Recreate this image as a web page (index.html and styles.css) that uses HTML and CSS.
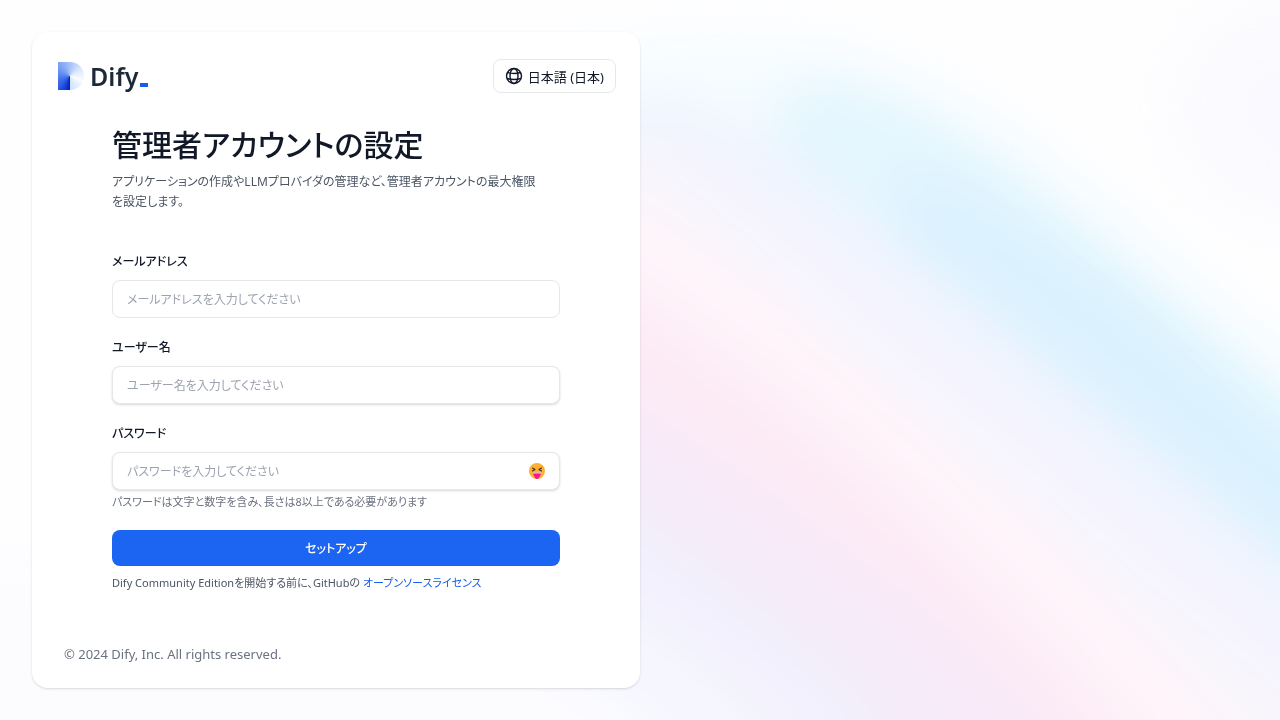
FILE: index.html
```
<!DOCTYPE html>
<html lang="ja">
<head>
    <meta charset="UTF-8">
    <meta name="viewport" content="width=device-width, initial-scale=1.0">
    <title>Dify</title>
    <link rel="stylesheet" href="styles.css">
</head>
<body>
    <svg class="backdrop" viewBox="0 0 1280 720" preserveAspectRatio="none" aria-hidden="true">
        <defs>
            <filter id="soft" x="-20%" y="-20%" width="140%" height="140%" color-interpolation-filters="sRGB">
                <feGaussianBlur stdDeviation="24"/>
            </filter>
            <filter id="softer" x="-50%" y="-50%" width="200%" height="200%" color-interpolation-filters="sRGB">
                <feGaussianBlur stdDeviation="40"/>
            </filter>
        </defs>
        <rect width="1280" height="720" fill="#fefeff"/>
        <ellipse cx="1310" cy="110" rx="120" ry="90" fill="#f9f8fe" filter="url(#softer)"/>
        <g filter="url(#soft)">
            <path d="M560 60 L700 40 L830 45 L930 85 L1010 130 L1110 210 L1200 285 L1420 465 V900 H300 V400 Z" fill="#f5fcff"/>
            <path d="M780 90 L850 80 L940 120 L1020 175 L1110 250 L1200 325 L1420 510 V900 H700 Z" fill="#e4f6fe"/>
            <path d="M900 170 L960 180 L1050 235 L1120 285 L1200 355 L1420 545 V900 H840 Z" fill="#dbf2fe"/>
            <path d="M560 100 L700 100 L790 155 L880 225 L980 305 L1080 390 L1180 470 L1420 665 V900 H300 Z" fill="#eff4fe"/>
            <path d="M560 130 L700 135 L800 205 L920 305 L1040 405 L1160 505 L1420 715 V900 H300 Z" fill="#f5f4fe"/>
            <path d="M560 130 L640 145 L760 245 L880 355 L1000 455 L1140 575 L1420 805 V900 H300 Z" fill="#f9f6fb"/>
            <path d="M560 170 L640 215 L800 325 L900 415 L1010 515 L1120 625 L1250 760 V900 H300 Z" fill="#fff4fa"/>
            <path d="M560 240 L640 295 L760 380 L860 460 L960 555 L1050 645 L1150 760 V900 H300 Z" fill="#fcebf5"/>
            <path d="M560 360 L640 405 L740 470 L850 550 L960 635 L1080 760 V900 H300 Z" fill="#f8eaf9"/>
            <path d="M560 430 L640 475 L740 545 L860 635 L970 760 V900 H300 Z" fill="#f3ecf9"/>
            <path d="M560 480 L640 530 L740 605 L840 690 L900 770 V900 H300 Z" fill="#f2f1fd"/>
            <path d="M500 560 L640 620 L720 680 L800 760 V900 H200 Z" fill="#f6f7fe"/>
            <path d="M-100 560 L440 600 L580 680 L680 760 V900 H-100 Z" fill="#fcfcff"/>
        </g>
    </svg>

    <div class="page">
        <div class="card">
            <header class="header">
                <div class="logo">
                    <span class="logo-mark"></span>
                    <span class="logo-text">Dify</span>
                    <span class="logo-cursor"></span>
                </div>
                <button type="button" class="lang-btn">
                    <svg width="18" height="18" viewBox="0 0 18 18" fill="none" stroke="currentColor" stroke-width="1.400" aria-hidden="true">
                        <circle cx="9" cy="9" r="7.500"/>
                        <ellipse cx="9" cy="9" rx="4" ry="7.500"/>
                        <path d="M2.500 5.500Q9 7.500 15.500 5.500M2 11.500Q9 13.500 16 11.500"/>
                    </svg>
                    <span>日本語 (日本)</span>
                </button>
            </header>

            <main class="content">
                <h1 class="title">管理者アカウントの設定</h1>
                <p class="desc">アプリケーションの作成やLLMプロバイダの管理など、管理者アカウントの最大権限<br>を設定します。</p>

                <form class="form">
                    <div class="form-group">
                        <label for="email">メールアドレス</label>
                        <input type="email" id="email" placeholder="メールアドレスを入力してください">
                    </div>
                    <div class="form-group">
                        <label for="name">ユーザー名</label>
                        <input type="text" id="name" class="raised" placeholder="ユーザー名を入力してください">
                    </div>
                    <div class="form-group">
                        <label for="password">パスワード</label>
                        <div class="password-box">
                            <input type="password" id="password" class="raised" placeholder="パスワードを入力してください">
                            <button type="button" class="toggle" aria-label="パスワードを表示">
                                <svg width="18" height="18" viewBox="0 0 18 18" aria-hidden="true">
                                    <circle cx="9" cy="9" r="8" fill="#ffb02e"/>
                                    <path d="M4.500 6l2.500 1.500L4.500 9M13.500 6L11 7.500 13.500 9" fill="none" stroke="#402a32" stroke-width="1.100" stroke-linecap="round" stroke-linejoin="round"/>
                                    <path d="M5 10.500h8c0 3-1.800 4.500-4 4.500s-4-1.500-4-4.500z" fill="#bb1d80"/>
                                    <path d="M5 10.500h8v1H5z" fill="#fff"/>
                                    <path d="M6.500 11.800h5V14.500a2.500 2.500 0 0 1-5 0z" fill="#ff1493"/>
                                </svg>
                            </button>
                        </div>
                        <div class="hint">パスワードは文字と数字を含み、長さは8以上である必要があります</div>
                    </div>
                    <button type="button" class="submit">セットアップ</button>
                </form>

                <p class="license">Dify Community Editionを開始する前に、GitHubの <a href="#">オープンソースライセンス</a></p>
            </main>

            <footer class="footer">© 2024 Dify, Inc. All rights reserved.</footer>
        </div>
    </div>
</body>
</html>
```
FILE: styles.css
```
* {
    box-sizing: border-box;
}
body {
    margin: 0;
    font-family: "Noto Sans", "Noto Sans CJK JP", sans-serif;
    font-feature-settings: "palt";
    font-size: 12px;
    color: #111827;
    background-color: #fefeff;
}
button, input {
    font: inherit;
    font-feature-settings: inherit;
    color: inherit;
}
.backdrop {
    position: fixed;
    top: 0;
    left: 0;
    width: 100%;
    height: 100%;
}
.page {
    position: relative;
    display: flex;
    min-height: 100vh;
    padding: 32px;
}
.card {
    display: flex;
    flex-direction: column;
    width: 50%;
    background-color: #fff;
    border-radius: 16px;
    box-shadow: 0 1px 3px rgba(16, 24, 40, 0.1), 0 1px 2px rgba(16, 24, 40, 0.06);
}
.header {
    display: flex;
    align-items: center;
    justify-content: space-between;
    padding: 27px 24px 0 26px;
}
.logo {
    display: flex;
    align-items: center;
    height: 34px;
}
.logo-mark {
    width: 26px;
    height: 28px;
    margin-right: 6px;
    border-radius: 0 14px 14px 0;
    background: conic-gradient(from 180deg at 45% 50%, #0021c4, #2c5ce4 12%, #5f88f0 28%, #9dbcf8 48%, #dbe8fe 66%, #fafcff 80%, #cfe0ff 100%);
}
.logo-text {
    font-size: 25px;
    font-weight: 600;
    line-height: 34px;
    color: #1d2939;
}
.logo-cursor {
    width: 8px;
    height: 4px;
    margin: 18px 0 0 2px;
    background-color: #155eef;
}
.lang-btn {
    display: flex;
    align-items: center;
    gap: 5px;
    height: 34px;
    padding: 0 11px;
    font-size: 13px;
    background-color: #fff;
    border: 1px solid #e5e7eb;
    border-radius: 8px;
}
.content {
    width: 100%;
    max-width: 496px;
    margin: 0 auto;
    padding: 32px 24px 0;
}
.title {
    margin: 0;
    font-size: 30px;
    font-weight: 500;
    line-height: 40px;
}
.desc {
    margin: 7px 0 0;
    line-height: 20px;
    color: #4b5563;
}
.form {
    margin-top: 40px;
}
.form-group {
    margin-bottom: 20px;
}
.form-group label {
    display: block;
    margin-bottom: 8px;
    font-weight: 500;
    line-height: 20px;
}
.form-group input {
    display: block;
    width: 100%;
    height: 38px;
    padding: 0 14px;
    background-color: #fff;
    border: 1px solid #e5e7eb;
    border-radius: 8px;
}
.form-group input.raised {
    box-shadow: 0 1px 3px rgba(0, 0, 0, 0.1), 0 1px 2px rgba(0, 0, 0, 0.06);
}
.form-group input::placeholder {
    color: #9ca3af;
    opacity: 1;
}
.password-box {
    position: relative;
}
.toggle {
    position: absolute;
    top: 0;
    right: 14px;
    display: flex;
    align-items: center;
    height: 38px;
    padding: 0;
    background: none;
    border: 0;
}
.hint {
    margin-top: 4px;
    font-size: 11px;
    line-height: 16px;
    color: #6b7280;
}
.submit {
    display: block;
    width: 100%;
    height: 36px;
    font-weight: 500;
    color: #fff;
    background-color: #1c64f2;
    border: 0;
    border-radius: 8px;
}
.license {
    margin: 8px 0 0;
    font-size: 11px;
    line-height: 18px;
    color: #4b5563;
}
.license a {
    color: #155eef;
    text-decoration: none;
}
.footer {
    margin-top: auto;
    padding: 24px 32px;
    font-size: 13px;
    line-height: 20px;
    color: #6b7280;
}
```
